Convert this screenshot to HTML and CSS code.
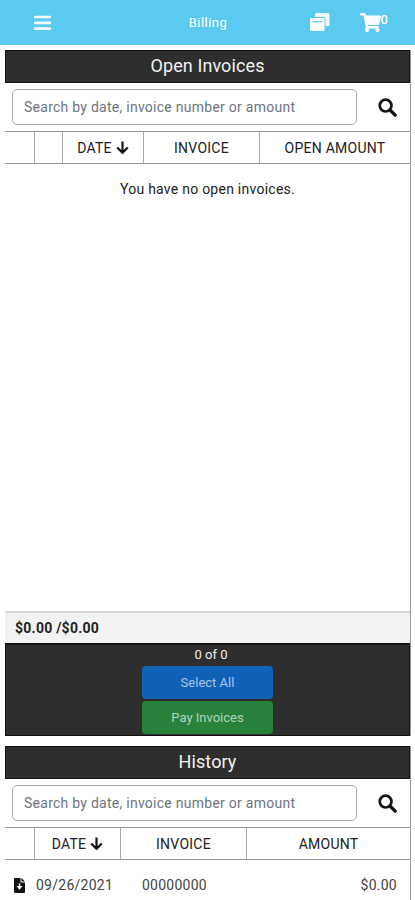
FILE: index.html
```html
<!DOCTYPE html>
<html lang="en">
<head>
    <meta charset="UTF-8">
    <meta name="viewport" content="width=device-width, initial-scale=1.0">
    <title>Billing</title>
    <link rel="stylesheet" href="styles.css">
</head>
<body>

    <!-- Header -->
    <header>
        <button class="menu-button" aria-label="Menu">
            <svg width="17" height="16" viewBox="0 0 17 16"><path d="M1.200 2h14.600M1.200 7.800h14.600M1.200 13.600h14.600" stroke="#fff" stroke-width="2.700" stroke-linecap="round"/></svg>
        </button>
        <h1>Billing</h1>
        <div class="header-icons">
            <svg class="cards-icon" width="20" height="19" viewBox="0 0 20 19">
                <path d="M6.500 0h11.500a1.500 1.500 0 0 1 1.500 1.500v10a1.500 1.500 0 0 1-1.500 1.500h-2.500V6.500a2.500 2.500 0 0 0-2.500-2.500H5V1.500A1.500 1.500 0 0 1 6.500 0z" fill="#fff" fill-opacity=".9"/>
                <path d="M1.500 5h11.500a1.500 1.500 0 0 1 1.500 1.500v10a1.500 1.500 0 0 1-1.500 1.500h-11.500a1.500 1.500 0 0 1-1.500-1.500v-10a1.500 1.500 0 0 1 1.500-1.500z" fill="#fff"/>
                <path d="M2.500 8.700h9.500" stroke="#5bcaf0" stroke-width="1.300"/>
            </svg>
            <div class="cart">
                <svg width="21" height="19" viewBox="0 0 576 512" preserveAspectRatio="none"><path fill="#fff" d="M528.120 301.319l47.273-208C578.806 78.301 567.391 64 551.990 64H159.208l-9.166-44.810C147.758 8.021 137.930 0 126.529 0H24C10.745 0 0 10.745 0 24v16c0 13.255 10.745 24 24 24h69.883l70.248 343.435C147.325 417.100 136 435.222 136 456c0 30.928 25.072 56 56 56s56-25.072 56-56c0-15.674-6.447-29.835-16.824-40h209.647C430.447 426.165 424 440.326 424 456c0 30.928 25.072 56 56 56s56-25.072 56-56c0-22.172-12.888-41.332-31.579-50.405l5.517-24.276c3.413-15.018-8.002-29.319-23.403-29.319H218.117l-6.545-32h293.145c11.206 0 20.920-7.754 23.403-18.681z"/></svg>
                <span>0</span>
            </div>
        </div>
    </header>

    <main>
        <!-- Open Invoices -->
        <section class="panel open-panel">
            <h2>Open Invoices</h2>
            <div class="search-bar">
                <input type="text" placeholder="Search by date, invoice number or amount">
                <button class="search-button" aria-label="Search">
                    <svg width="19" height="19" viewBox="0 0 19 19"><circle cx="7.600" cy="7.600" r="5.900" fill="none" stroke="#111" stroke-width="2.700"/><path d="M12 12l5.200 5.200" stroke="#111" stroke-width="3.200" stroke-linecap="round"/></svg>
                </button>
            </div>
            <div class="table-head open-grid">
                <span></span>
                <span></span>
                <span>DATE <svg width="13" height="13" viewBox="0 0 13 13"><path d="M6.500.5v11M1.200 6.500l5.300 5.300 5.300-5.300" fill="none" stroke="#111" stroke-width="2.200"/></svg></span>
                <span>INVOICE</span>
                <span>OPEN AMOUNT</span>
            </div>
            <p class="empty">You have no open invoices.</p>
            <div class="totals">$0.00 /$0.00</div>
            <div class="actions">
                <p>0 of 0</p>
                <button class="select-all">Select All</button>
                <button class="pay">Pay Invoices</button>
            </div>
        </section>

        <!-- History -->
        <section class="panel history-panel">
            <h2>History</h2>
            <div class="search-bar">
                <input type="text" placeholder="Search by date, invoice number or amount">
                <button class="search-button" aria-label="Search">
                    <svg width="19" height="19" viewBox="0 0 19 19"><circle cx="7.600" cy="7.600" r="5.900" fill="none" stroke="#111" stroke-width="2.700"/><path d="M12 12l5.200 5.200" stroke="#111" stroke-width="3.200" stroke-linecap="round"/></svg>
                </button>
            </div>
            <div class="table-head history-grid">
                <span></span>
                <span>DATE <svg width="13" height="13" viewBox="0 0 13 13"><path d="M6.500.5v11M1.200 6.500l5.300 5.300 5.300-5.300" fill="none" stroke="#111" stroke-width="2.200"/></svg></span>
                <span>INVOICE</span>
                <span>AMOUNT</span>
            </div>
            <div class="table-row history-grid">
                <span class="file"><svg width="11" height="15" viewBox="0 0 11 15"><path d="M1 0h5.500v4.500H11V14a1 1 0 0 1-1 1H1a1 1 0 0 1-1-1V1a1 1 0 0 1 1-1zM7.400 0L11 3.600H7.400z" fill="#111"/><path d="M4.700 5.500h1.600v2.500h2.200L5.500 11.800 2.500 8h2.200z" fill="#fff"/></svg></span>
                <span class="date">09/26/2021</span>
                <span class="number">00000000</span>
                <span class="price">$0.00</span>
            </div>
        </section>
    </main>

</body>
</html>
```
FILE: styles.css
```css
/* Basic Styling */
* {
    box-sizing: border-box;
}

body {
    margin: 0;
    height: 900px;
    overflow: hidden;
    font-family: Roboto, Arial, sans-serif;
    font-size: 14px;
    background: #fff;
    color: #222;
}

h1, h2, p {
    margin: 0;
    font-weight: 400;
}

button {
    border: none;
    padding: 0;
    font-family: inherit;
    cursor: pointer;
}

svg {
    display: block;
    flex: none;
}

/* Header */
header {
    height: 45px;
    background: #5bcaf0;
    color: #fff;
    display: grid;
    grid-template-columns: 1fr auto 1fr;
    align-items: center;
    padding: 0 27px 0 34px;
}

.menu-button {
    background: none;
    justify-self: start;
}

h1 {
    font-size: 13px;
    letter-spacing: 0.5px;
    padding-right: 6px;
}

.header-icons {
    display: flex;
    justify-content: flex-end;
    align-items: center;
    gap: 30px;
}

.cart {
    display: flex;
}

.cart span {
    font-size: 13px;
    font-weight: 500;
    line-height: 14px;
}

/* Panels */
.panel {
    margin: 5px 4px 0 5px;
    border-right: 1px solid #999;
    display: flex;
    flex-direction: column;
}

.open-panel {
    height: 686px;
}

.history-panel {
    margin-top: 10px;
}

h2 {
    height: 33px;
    line-height: 30px;
    background: #2e2e2e;
    border: 1px solid #111;
    color: #f2f2f2;
    font-size: 18px;
    letter-spacing: 0.1px;
    text-align: center;
}

.search-bar {
    display: flex;
    align-items: center;
    height: 48px;
    padding: 0 13px 0 7px;
}

.search-bar input {
    width: 345px;
    height: 36px;
    border: 1px solid #aaa;
    border-radius: 5px;
    padding: 0 11px;
    font-family: inherit;
    font-size: 14px;
    letter-spacing: 0.26px;
}

.search-bar input::placeholder {
    color: #6c757d;
}

.search-button {
    background: none;
    margin-left: auto;
}

/* Tables */
.open-grid {
    display: grid;
    grid-template-columns: 30px 28px 81px 116px 1fr;
}

.history-grid {
    display: grid;
    grid-template-columns: 30px 86px 126px 1fr;
}

.table-head {
    height: 33px;
    border-top: 1px solid #999;
    border-bottom: 1px solid #999;
    letter-spacing: 0.25px;
}

.table-head span {
    display: flex;
    align-items: center;
    justify-content: center;
    gap: 4px;
    border-right: 1px solid #aaa;
}

.table-head span:last-child {
    border-right: none;
}

.table-row {
    height: 50px;
    align-items: center;
    color: #444;
    letter-spacing: 0.25px;
}

.file {
    padding-left: 9px;
}

.date {
    padding-left: 1px;
}

.number {
    padding-left: 21px;
}

.price {
    text-align: right;
    padding-right: 13px;
}

.empty {
    flex: 1;
    padding-top: 17px;
    text-align: center;
    letter-spacing: 0.25px;
}

/* Totals and buttons */
.totals {
    height: 32px;
    line-height: 31px;
    padding-left: 10px;
    background: #f2f2f2;
    border-top: 2px solid #d6d6d6;
    font-weight: 700;
    letter-spacing: 0.25px;
}

.actions {
    height: 93px;
    background: #2e2e2e;
    border: 1px solid #111;
    border-top-width: 2px;
    display: flex;
    flex-direction: column;
    align-items: center;
    gap: 2px;
}

.actions p {
    color: #eee;
    font-size: 13px;
    line-height: 19px;
    padding-left: 7px;
}

.actions button {
    width: 131px;
    height: 33px;
    border-radius: 4px;
    font-size: 13px;
}

.select-all {
    background: #1261b8;
    color: #a9c5e6;
}

.pay {
    background: #29823b;
    color: #b4d3b9;
}
```
